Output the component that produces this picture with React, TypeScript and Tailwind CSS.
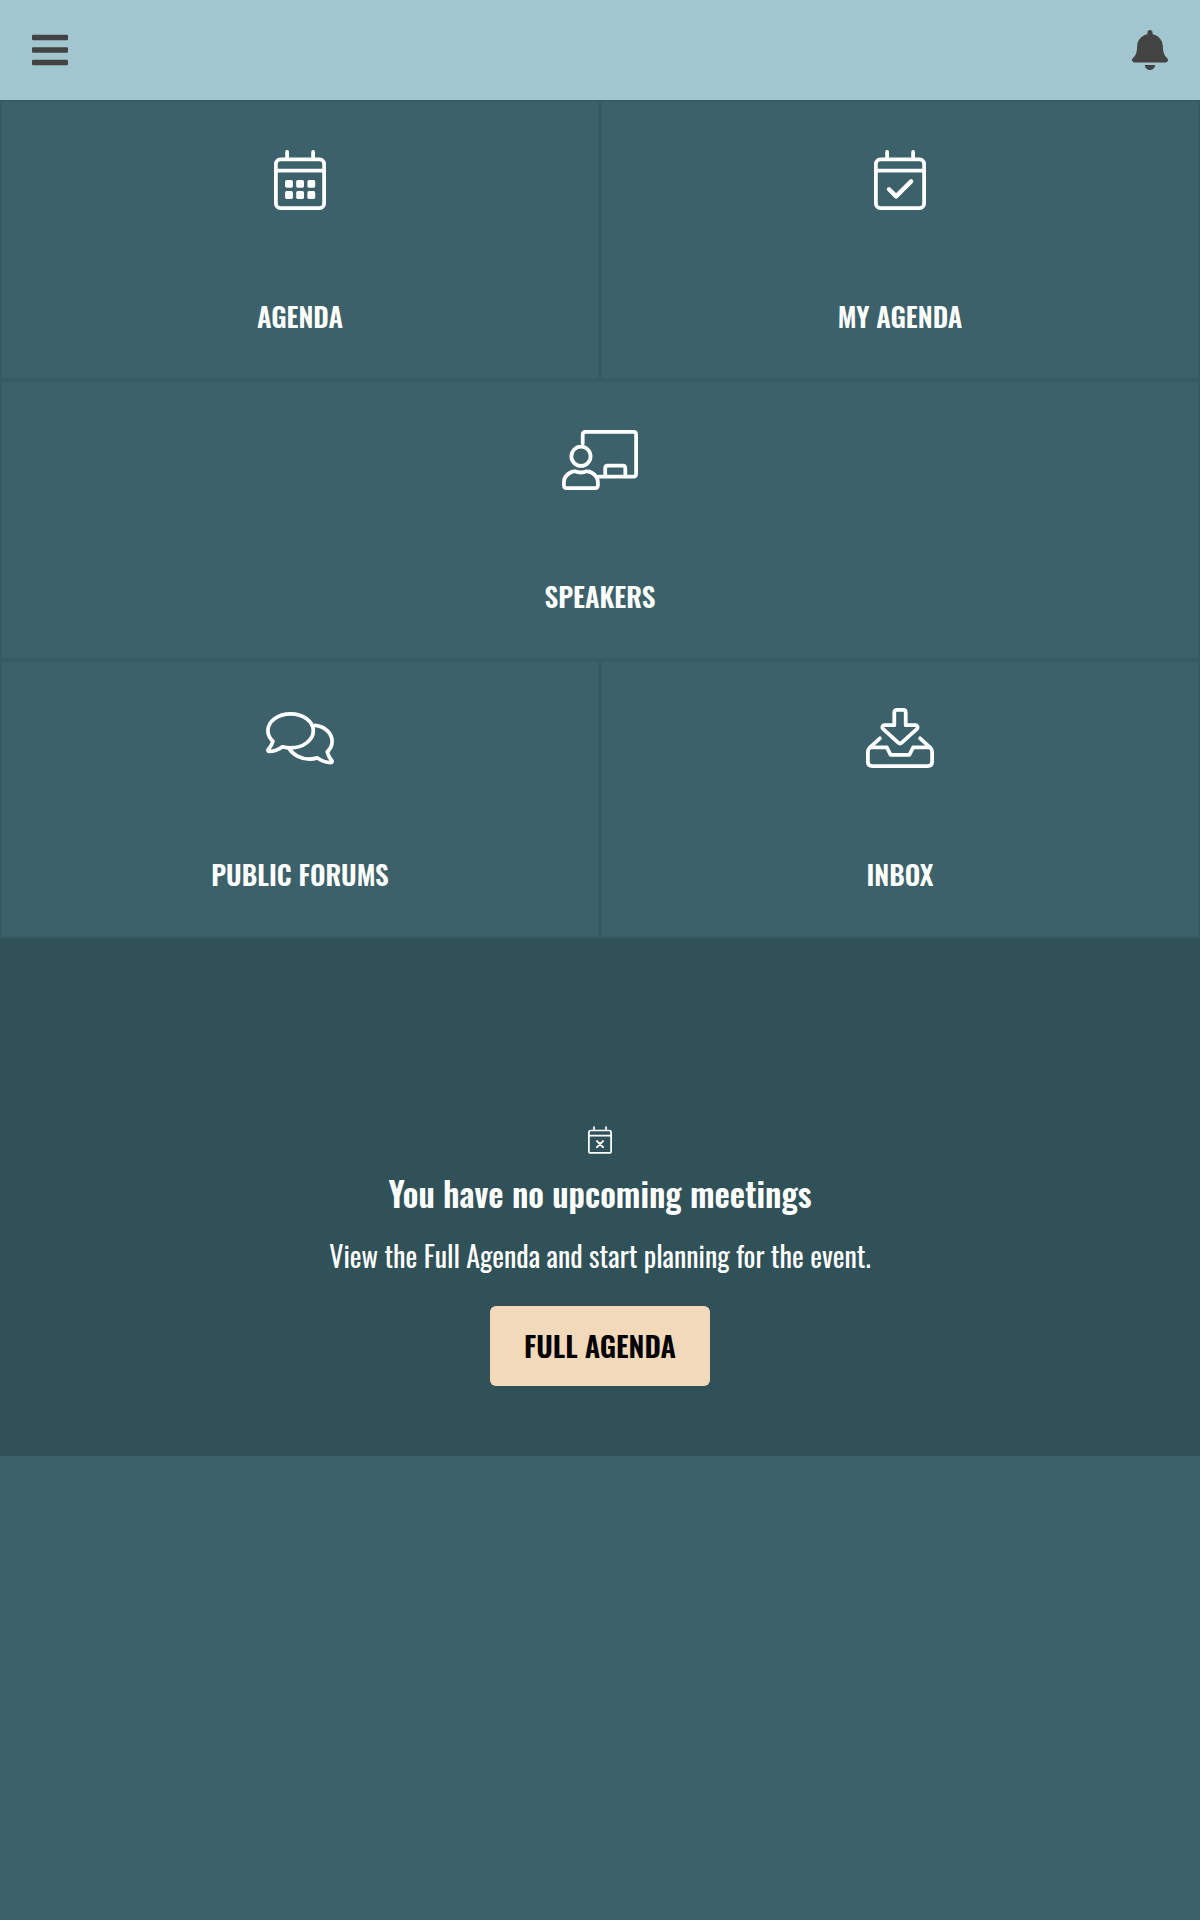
import type { ReactNode } from 'react';
import { FaBars, FaBell } from 'react-icons/fa';

const iconProps = {
  fill: 'none',
  stroke: 'currentColor',
  strokeWidth: 3.75,
  strokeLinecap: 'round',
  strokeLinejoin: 'round',
} as const;

function CalendarFrame({ className, children }: { className: string; children: ReactNode }) {
  return (
    <svg viewBox="0 0 52 60" className={className} {...iconProps}>
      <rect x="1.9" y="9.4" width="48.2" height="48.7" rx="4.5" />
      <path d="M2 20.6h48M13.1 1.9v7M39.1 1.9v7" />
      {children}
    </svg>
  );
}

function CalendarDaysIcon() {
  return (
    <CalendarFrame className="h-[60px] w-[52px]">
      <g fill="currentColor" stroke="none">
        <rect x="11.1" y="29.9" width="7.8" height="7.8" rx="1.6" />
        <rect x="22.2" y="29.9" width="7.8" height="7.8" rx="1.6" />
        <rect x="33.4" y="29.9" width="7.8" height="7.8" rx="1.6" />
        <rect x="11.1" y="41.1" width="7.8" height="7.8" rx="1.6" />
        <rect x="22.2" y="41.1" width="7.8" height="7.8" rx="1.6" />
        <rect x="33.4" y="41.1" width="7.8" height="7.8" rx="1.6" />
      </g>
    </CalendarFrame>
  );
}

function CalendarCheckIcon() {
  return (
    <CalendarFrame className="h-[60px] w-[52px]">
      <path d="M15 39.3l7.1 7.1 15-15" strokeWidth="4.4" />
    </CalendarFrame>
  );
}

function CalendarXIcon() {
  return (
    <CalendarFrame className="h-[28px] w-[24px]">
      <path d="M19.5 32.5l13 13M32.5 32.5l-13 13" strokeWidth="4.4" />
    </CalendarFrame>
  );
}

function SpeakerIcon() {
  return (
    <svg viewBox="0 0 76 60" className="h-[60px] w-[76px]" {...iconProps}>
      <path d="M20.7 13.5V4.5q0-2.6 2.6-2.6h48.2q2.6 0 2.6 2.6v39.6q0 2.6-2.6 2.6H36.5" />
      <path d="M43.2 46V38.3q0-2.6 2.6-2.6h14.9q2.6 0 2.6 2.6V46" />
      <circle cx="19" cy="26.3" r="9.6" />
      <path d="M13 41.3q-2.5 0-4.6 1.2Q1.9 46 1.9 52.5v2.8q0 2.8 2.8 2.8h28.4q2.8 0 2.8-2.8v-2.8q0-6.5-6.5-10-2.1-1.2-4.6-1.2-5.9 2.4-11.8 0z" />
    </svg>
  );
}

function ForumsIcon() {
  return (
    <svg viewBox="0 0 68 56" className="h-[56px] w-[68px]" {...iconProps}>
      <path d="M24.6 3.8C12 3.8 1.9 11.4 1.9 20.8c0 4 1.9 7.6 5 10.5-.9 3.4-2.5 5.9-4.5 8-.8.9-.3 2.1.9 2.1 5 0 9.7-2 13.2-4.6 2.5.7 5.2 1.1 8.1 1.1 12.5 0 22.7-7.7 22.7-17.1S37.1 3.8 24.6 3.8z" />
      <path d="M49 15.3c9.7.9 17.1 7.7 17.1 16 0 4-1.8 7.7-4.8 10.6.9 3.4 2.4 6.3 4.4 8.5.8.9.3 2.2-.9 2.2-5 0-9.7-2.1-13.3-4.7-2.5.7-5.2 1.1-8 1.1-9 0-16.8-4.4-20.3-10.5" />
    </svg>
  );
}

function InboxIcon() {
  return (
    <svg viewBox="0 0 68 60" className="h-[60px] w-[68px]" {...iconProps}>
      <path d="M28.3 17.2V4.5q0-2.6 2.6-2.6h6.2q2.6 0 2.6 2.6v12.7h9.7c2.1 0 3 2.2 1.6 3.7L35.8 34.7q-1.8 1.7-3.6 0L17 20.9c-1.5-1.5-.6-3.7 1.6-3.7z" />
      <path d="M13.9 30.3L3.8 39.6Q1.9 41.3 1.9 44v9.6q0 4.5 4.5 4.5h55.2q4.5 0 4.5-4.5V44q0-2.7-1.9-4.4L54.1 30.3" />
      <path d="M4 39.4h16.8l3.8 7.5h18.8l3.8-7.5H64" />
    </svg>
  );
}

interface TileProps {
  label: string;
  icon: ReactNode;
  className: string;
}

function Tile({ label, icon, className }: Readonly<TileProps>) {
  return (
    <button
      type="button"
      className={`flex flex-col items-center border-2 border-[#375b63] ${className}`}
    >
      <span className="flex h-[60px] items-center">{icon}</span>
      <span className="mt-[86px] text-[27px] leading-10 font-semibold whitespace-nowrap uppercase">
        {label}
      </span>
    </button>
  );
}

export default function App() {
  return (
    <div className="min-h-[1920px] bg-[#3c616a] font-['Oswald','Roboto',sans-serif] text-white">
      <header className="flex h-[100px] items-center justify-between bg-[#a1c6cf] px-8 text-[#434343]">
        <button type="button" aria-label="Menu">
          <FaBars className="h-10 w-9" preserveAspectRatio="none" />
        </button>
        <button type="button" aria-label="Notifications">
          <FaBell className="h-10 w-9" preserveAspectRatio="none" />
        </button>
      </header>

      <nav className="grid grid-cols-2">
        <Tile label="Agenda" icon={<CalendarDaysIcon />} className="h-[280px] pt-12" />
        <Tile label="My Agenda" icon={<CalendarCheckIcon />} className="h-[280px] pt-12" />
        <Tile label="Speakers" icon={<SpeakerIcon />} className="col-span-2 h-[280px] pt-12" />
        <Tile label="Public Forums" icon={<ForumsIcon />} className="h-[278px] pt-[46px]" />
        <Tile label="Inbox" icon={<InboxIcon />} className="h-[278px] pt-[46px]" />
      </nav>

      <section className="flex h-[518px] flex-col items-center bg-[#315159] pt-[188px]">
        <CalendarXIcon />
        <h2 className="mt-[15px] text-[33.3px] leading-[48px] font-semibold">
          You have no upcoming meetings
        </h2>
        <p className="mt-[19px] text-[28px] leading-10">
          View the Full Agenda and start planning for the event.
        </p>
        <button
          type="button"
          className="mt-[30px] flex h-20 w-[220px] items-center justify-center rounded-md bg-[#f2d9b9] pb-0.5 text-[28.6px] font-semibold text-black uppercase"
        >
          Full Agenda
        </button>
      </section>
    </div>
  );
}
